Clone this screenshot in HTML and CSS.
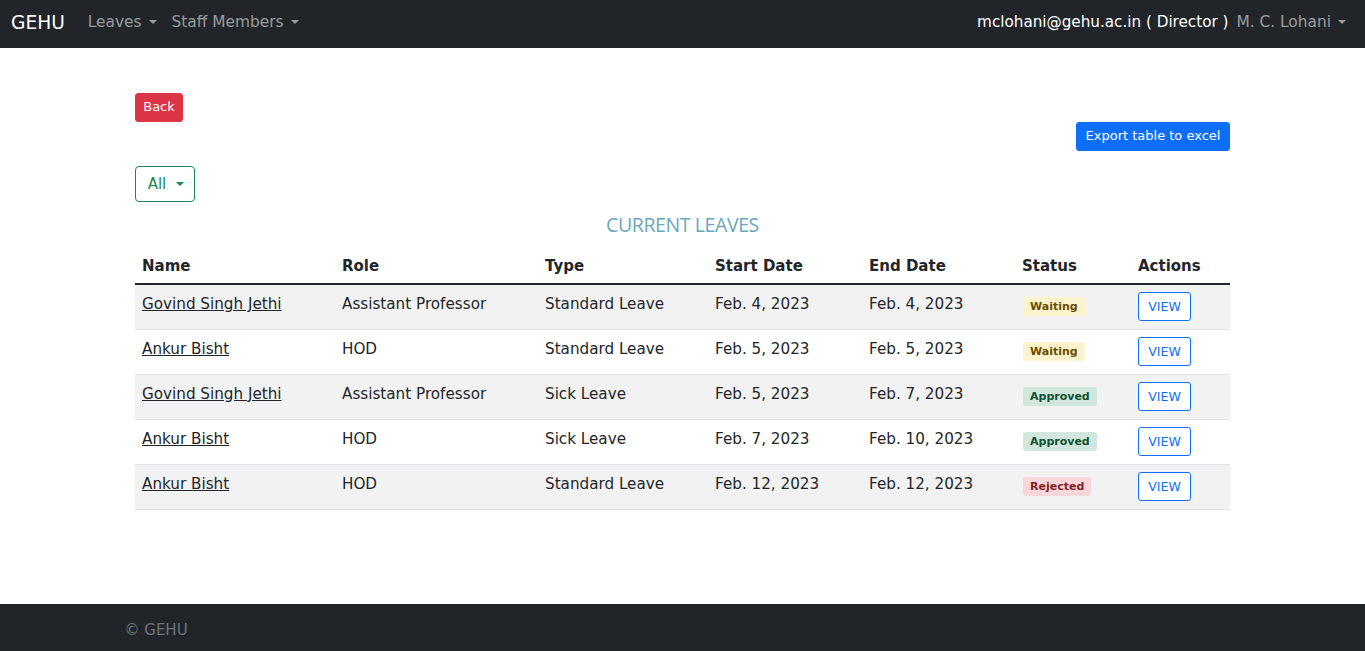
FILE: index.html
```html
<!DOCTYPE html>
<html lang="en">
<head>
<meta charset="utf-8">
<title>Current Leaves</title>
<link rel="stylesheet" href="styles.css">
</head>
<body>
<nav class="navbar">
  <div class="nav-left">
    <a class="brand" href="#">GEHU</a>
    <a class="nav-link dropdown" href="#">Leaves</a>
    <a class="nav-link dropdown" href="#">Staff Members</a>
  </div>
  <div class="nav-right">
    <span class="user">mclohani@gehu.ac.in ( Director )</span>
    <a class="nav-link dropdown" href="#">M. C. Lohani</a>
  </div>
</nav>

<main class="container">
  <div class="inner">
    <div class="top-row">
      <button class="btn btn-danger">Back</button>
    </div>
    <div class="export-row">
      <button class="btn btn-primary">Export table to excel</button>
    </div>
    <div class="filter-row">
      <button class="btn-filter dropdown">All</button>
    </div>
    <h4 class="title">CURRENT LEAVES</h4>
    <table class="table">
      <thead>
        <tr>
          <th class="c1">Name</th>
          <th class="c2">Role</th>
          <th class="c3">Type</th>
          <th class="c4">Start Date</th>
          <th class="c5">End Date</th>
          <th class="c6">Status</th>
          <th class="c7">Actions</th>
        </tr>
      </thead>
      <tbody>
        <tr>
          <td><a href="#">Govind Singh Jethi</a></td>
          <td>Assistant Professor</td>
          <td>Standard Leave</td>
          <td>Feb. 4, 2023</td>
          <td>Feb. 4, 2023</td>
          <td><span class="badge waiting">Waiting</span></td>
          <td><button class="btn-view">VIEW</button></td>
        </tr>
        <tr>
          <td><a href="#">Ankur Bisht</a></td>
          <td>HOD</td>
          <td>Standard Leave</td>
          <td>Feb. 5, 2023</td>
          <td>Feb. 5, 2023</td>
          <td><span class="badge waiting">Waiting</span></td>
          <td><button class="btn-view">VIEW</button></td>
        </tr>
        <tr>
          <td><a href="#">Govind Singh Jethi</a></td>
          <td>Assistant Professor</td>
          <td>Sick Leave</td>
          <td>Feb. 5, 2023</td>
          <td>Feb. 7, 2023</td>
          <td><span class="badge approved">Approved</span></td>
          <td><button class="btn-view">VIEW</button></td>
        </tr>
        <tr>
          <td><a href="#">Ankur Bisht</a></td>
          <td>HOD</td>
          <td>Sick Leave</td>
          <td>Feb. 7, 2023</td>
          <td>Feb. 10, 2023</td>
          <td><span class="badge approved">Approved</span></td>
          <td><button class="btn-view">VIEW</button></td>
        </tr>
        <tr>
          <td><a href="#">Ankur Bisht</a></td>
          <td>HOD</td>
          <td>Standard Leave</td>
          <td>Feb. 12, 2023</td>
          <td>Feb. 12, 2023</td>
          <td><span class="badge rejected">Rejected</span></td>
          <td><button class="btn-view">VIEW</button></td>
        </tr>
      </tbody>
    </table>
  </div>
</main>

<footer class="footer">
  <div class="footer-inner">© GEHU</div>
</footer>
</body>
</html>
```

FILE: styles.css
```css
* { box-sizing: border-box; }
html, body { margin: 0; padding: 0; }
body {
  font-family: "DejaVu Sans", Verdana, sans-serif;
  font-size: 15px;
  color: #212529;
  background: #fff;
  min-height: 651px;
  display: flex;
  flex-direction: column;
}
a { color: inherit; }

.navbar {
  height: 48px;
  background: #212529;
  display: flex;
  align-items: center;
  justify-content: space-between;
  padding: 0 11px 4px;
}
.nav-left, .nav-right { display: flex; align-items: center; }
.brand {
  color: #fff;
  text-decoration: none;
  font-size: 18.6px;
  margin-right: 23px;
}
.nav-link {
  color: rgba(255,255,255,.55);
  text-decoration: none;
  font-size: 15.4px;
  margin-right: 15px;
}
.nav-right .nav-link { margin-right: 8px; margin-left: 8px; }
.user { color: #fff; font-size: 15.2px; }
.dropdown::after {
  content: "";
  display: inline-block;
  margin-left: 7px;
  vertical-align: 3px;
  border-top: 4px solid;
  border-left: 4px solid transparent;
  border-right: 4px solid transparent;
}

.container {
  flex: 1;
  width: 1116px;
  margin: 0 auto;
}
.inner {
  padding: 45px 10.5px 94px;
}
.btn {
  font-family: "DejaVu Sans", Verdana, sans-serif;
  font-size: 13px;
  border: 1px solid transparent;
  border-radius: 3px;
  color: #fff;
  height: 29px;
  padding: 0 0 2px;
  cursor: pointer;
}
.btn-danger { background: #dc3545; border-color: #dc3545; width: 48px; }
.btn-primary { background: #0d6efd; border-color: #0d6efd; width: 154px; }
.export-row { display: flex; justify-content: flex-end; }
.filter-row { margin-top: 15px; }
.btn-filter {
  font-family: "DejaVu Sans", Verdana, sans-serif;
  font-size: 15px;
  background: #fff;
  color: #198754;
  border: 1px solid #198754;
  border-radius: 4px;
  height: 36px;
  width: 60px;
  padding: 0 0 0 2px;
}
.btn-filter::after { margin-left: 10px; vertical-align: 3px; }

.title {
  margin: 11px 0 0;
  text-align: center;
  font-family: "Open Sans", sans-serif;
  font-weight: 400;
  font-size: 19.5px;
  letter-spacing: -0.4px;
  color: #6aa7bd;
  height: 24px;
  line-height: 24px;
}
.table {
  width: 100%;
  border-collapse: collapse;
  margin-top: 12px;
}
.table th {
  text-align: left;
  font-weight: 700;
  font-size: 15px;
  padding: 7px 7px 7px;
  height: 35px;
  border-bottom: 2px solid #212529;
}
.c1 { width: 200px; }
.c2 { width: 203px; }
.c3 { width: 170px; }
.c4 { width: 154px; }
.c5 { width: 153px; }
.c6 { width: 116px; }
.table td {
  padding: 0 7px 6px;
  height: 45px;
  border-bottom: 1px solid #dee2e6;
  vertical-align: middle;
  font-size: 15.2px;
}
.table tbody tr:nth-child(odd) td { background: #f2f2f2; }
.table td a { color: #212529; }

.badge {
  display: inline-block;
  font-size: 11px;
  font-weight: 700;
  padding: 3px 7px;
  border-radius: 3px;
  margin-top: 6px;
  margin-left: 1px;
}
.waiting { background: #fff3cd; color: #664d03; }
.approved { background: #d1e7dd; color: #0f5132; }
.rejected { background: #f8d7da; color: #842029; }
.btn-view {
  font-family: "DejaVu Sans", Verdana, sans-serif;
  font-size: 12.5px;
  color: #0d6efd;
  background: #fff;
  border: 1px solid #0d6efd;
  border-radius: 3px;
  width: 53px;
  height: 29px;
  padding: 0;
  margin-top: 6px;
}

.footer {
  background: #212529;
  height: 47px;
}
.footer-inner {
  width: 1116px;
  margin: 0 auto;
  color: #6c757d;
  font-size: 15px;
  line-height: 53px;
}
```
